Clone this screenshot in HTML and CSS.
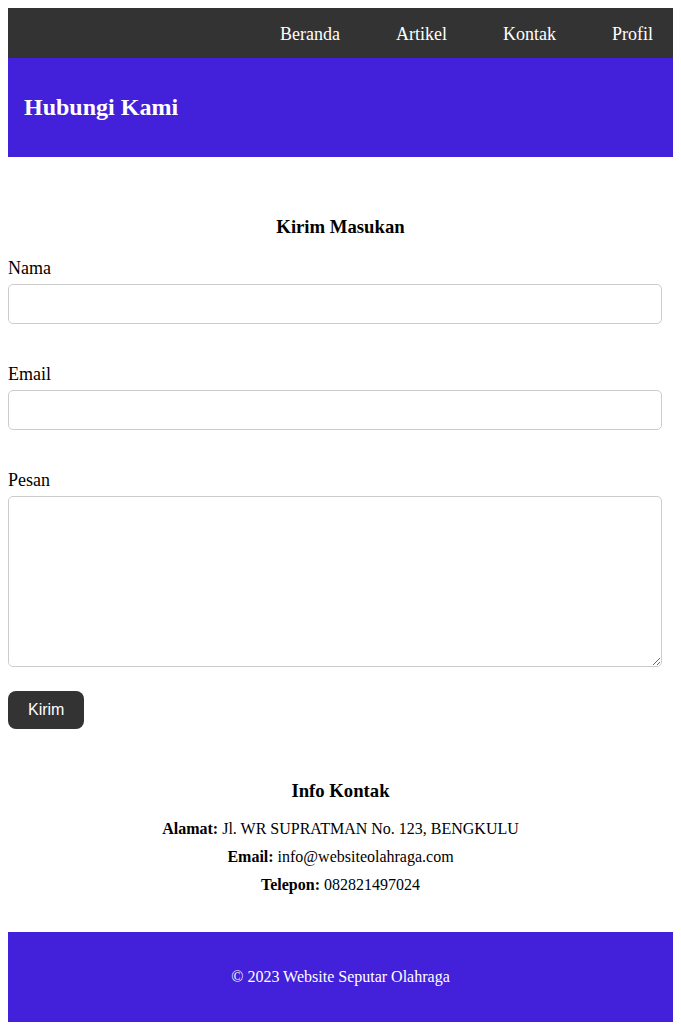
FILE: index.html
```html
<!DOCTYPE html>
<html lang="id">
<head>
<meta charset="utf-8">
<title>Hubungi Kami</title>
<link rel="stylesheet" href="styles.css">
</head>
<body>
<nav class="topnav">
  <ul class="nav-list">
    <li><a href="#">Beranda</a></li>
    <li><a href="#">Artikel</a></li>
    <li><a href="#">Kontak</a></li>
    <li><a href="#">Profil</a></li>
  </ul>
</nav>
<header class="page-header">
  <h2 class="page-title">Hubungi Kami</h2>
</header>
<main class="content">
  <section class="feedback">
    <h3 class="section-title">Kirim Masukan</h3>
    <form class="form">
      <div class="field">
        <label class="label" for="nama">Nama</label>
        <input class="input" type="text" id="nama">
      </div>
      <div class="field">
        <label class="label" for="email">Email</label>
        <input class="input" type="email" id="email">
      </div>
      <div class="field">
        <label class="label" for="pesan">Pesan</label>
        <textarea class="input textarea" id="pesan"></textarea>
      </div>
      <button class="btn" type="submit">Kirim</button>
    </form>
  </section>
  <section class="info">
    <h3 class="section-title">Info Kontak</h3>
    <p class="info-line"><strong>Alamat:</strong> Jl. WR SUPRATMAN No. 123, BENGKULU</p>
    <p class="info-line"><strong>Email:</strong> info@websiteolahraga.com</p>
    <p class="info-line"><strong>Telepon:</strong> 082821497024</p>
  </section>
</main>
<footer class="page-footer">
  <p class="footer-text">&copy; 2023 Website Seputar Olahraga</p>
</footer>
</body>
</html>
```
FILE: styles.css
```css
body {
  margin: 8px;
  font-family: "Liberation Serif", "Times New Roman", serif;
  font-size: 16px;
  color: #000;
  background: #fff;
}

.topnav {
  background: #333333;
  height: 50px;
  display: flex;
  justify-content: flex-end;
  align-items: center;
  padding-top: 2px;
  box-sizing: border-box;
}

.nav-list {
  list-style: none;
  margin: 0;
  padding: 0;
  display: flex;
  gap: 16px;
}

.nav-list a {
  display: block;
  padding: 0 20px;
  color: #fff;
  text-decoration: none;
  font-size: 18px;
}

.page-header {
  background: #4320d9;
  color: #fff;
  padding: 16px;
  height: 99px;
  box-sizing: border-box;
  display: flex;
  align-items: center;
}

.page-title {
  margin: 0;
  font-size: 24px;
  font-weight: bold;
}

.content {
  padding: 59px 0 28px;
}

.section-title {
  text-align: center;
  font-size: 18.72px;
  margin: 0;
}

.feedback .section-title {
  margin-bottom: 20px;
}

.form {
  display: flex;
  flex-direction: column;
}

.field {
  display: flex;
  flex-direction: column;
  align-items: flex-start;
  margin-bottom: 40px;
}

.field:last-of-type {
  margin-bottom: 24px;
}

.label {
  font-size: 18px;
  margin-bottom: 5px;
}

.input {
  width: calc(100% - 11px);
  box-sizing: border-box;
  height: 40px;
  padding: 10px;
  border: 1px solid #cccccc;
  border-radius: 5px;
  font-size: 16px;
  font-family: inherit;
  margin: 0;
}

.textarea {
  height: 171px;
  resize: vertical;
}

.btn {
  align-self: flex-start;
  background: #333333;
  color: #fff;
  border: none;
  border-radius: 8px;
  padding: 10px 20px;
  height: 38px;
  font-family: "Liberation Sans", Arial, sans-serif;
  font-size: 16px;
  cursor: pointer;
}

.info {
  text-align: center;
  margin-top: 51px;
}

.info .section-title {
  margin-bottom: 18px;
}

.info-line {
  margin: 10px 0;
}

.page-footer {
  background: #4320d9;
  color: #fff;
  text-align: center;
  padding: 20px;
}

.footer-text {
  margin: 16px 0;
}
```
